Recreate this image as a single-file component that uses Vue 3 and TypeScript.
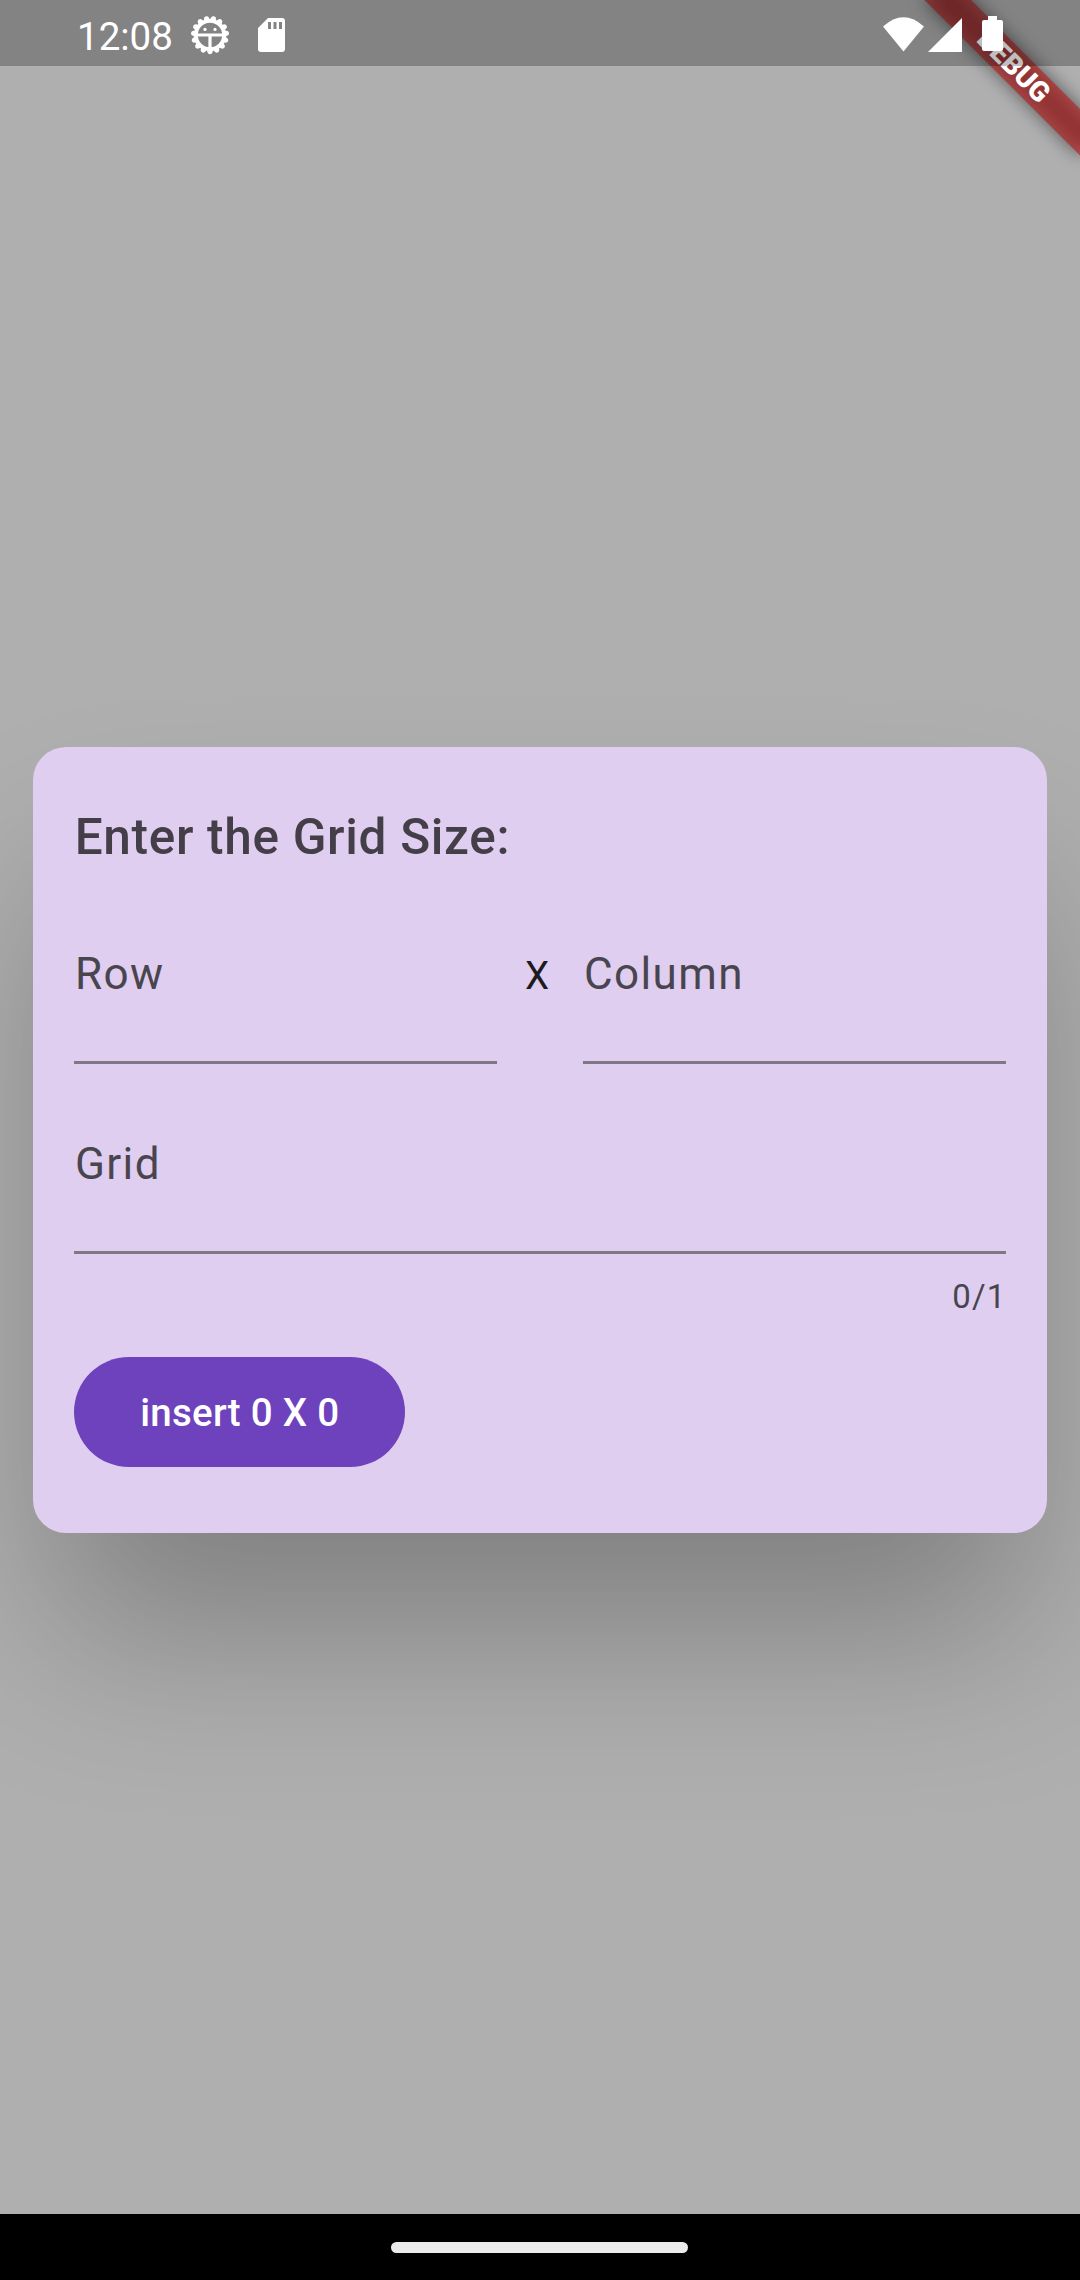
<script setup lang="ts">
import { ref } from 'vue'

const rows = ref(0)
const columns = ref(0)
const time = '12:08'
const teeth: number[] = Array.from({ length: 15 }, (_, i) => i * 24)
</script>

<template>
  <div class="screen">
    <div class="ribbon"><span class="ribbon-label">DEBUG</span></div>
    <header class="status">
      <span class="time">{{ time }}</span>
      <svg class="gear" width="40" height="40" viewBox="-20 -20 40 40">
        <path v-for="a in teeth" :key="a" :transform="`rotate(${a})`" d="M-3.600 14.500L-1.900 18.400Q0 20 1.900 18.400L3.600 14.500Z" fill="#fff" />
        <circle r="14" fill="none" stroke="#fff" stroke-width="3.6" />
        <path d="M-13 0H13M0 0V14" stroke="#fff" stroke-width="3.2" />
        <circle cx="-5" cy="-5.6" r="1.6" fill="#fff" />
        <circle cx="5" cy="-5.6" r="1.6" fill="#fff" />
      </svg>
      <svg class="card-icon" width="27" height="34" viewBox="0 0 27 34">
        <path fill="#fff" fill-rule="evenodd" d="M10 0H24Q27 0 27 3V31Q27 34 24 34H3Q0 34 0 31V10ZM10 4V11H13V4ZM15.5 4V11H18.500V4ZM21 4V11H24V4Z" />
      </svg>
      <span class="spacer"></span>
      <svg width="122" height="38" viewBox="0 0 122 38">
        <path fill="#fff" d="M0 10.500Q20.500-8 41 10.500L20.500 35.500Z" />
        <path fill="#fff" d="M45 36H79V2Z" />
        <path fill="#fff" d="M105 0H114V4H118Q120 4 120 6V33Q120 35 118 35H101Q99 35 99 33V6Q99 4 101 4H105Z" />
      </svg>
    </header>

    <main class="stage">
      <section class="dialog">
        <h1 class="title">Enter the Grid Size:</h1>
        <div class="fields">
          <label class="field">Row</label>
          <span class="times">X</span>
          <label class="field column">Column</label>
        </div>
        <label class="field grid">Grid</label>
        <div class="counter">0/1</div>
        <button class="insert">insert {{ rows }} X {{ columns }}</button>
      </section>
    </main>

    <footer class="nav"><span class="handle"></span></footer>
  </div>
</template>

<style>
body {
  margin: 0;
}
</style>

<style scoped>
.screen {
  position: relative;
  display: flex;
  flex-direction: column;
  width: 1080px;
  height: 2280px;
  overflow: hidden;
  background: #afafaf;
  font-family: Roboto, sans-serif;
}

.ribbon {
  position: absolute;
  top: 77px;
  left: 970px;
  width: 220px;
  height: 33px;
  transform: rotate(45deg);
  transform-origin: 110px -77px;
}

.ribbon::before {
  content: '';
  position: absolute;
  inset: 0;
  background: rgba(0, 0, 0, 0.5);
  filter: blur(9px);
}

.ribbon-label {
  position: relative;
  display: block;
  background: rgba(183, 28, 28, 0.627);
  color: #fff;
  font-size: 28.05px;
  font-weight: 900;
  line-height: 33px;
  text-align: center;
}

.status {
  position: relative;
  display: flex;
  align-items: flex-start;
  box-sizing: border-box;
  height: 66px;
  padding: 16px 75px 0 77px;
  background: rgba(0, 0, 0, 0.25);
  color: #fff;
}

.time {
  width: 113px;
  font-size: 38.5px;
  line-height: 42px;
}

.gear {
  margin-top: -1px;
}

.card-icon {
  margin: 2px 0 0 28px;
}

.spacer {
  flex: 1;
}

.stage {
  display: flex;
  flex: 1;
  justify-content: center;
  align-items: flex-start;
  padding-top: 681px;
}

.dialog {
  box-sizing: border-box;
  width: 1014px;
  height: 786px;
  padding: 57px 41.25px 0;
  border-radius: 33px;
  background: #dfceef;
  box-shadow: 0 117px 180px -20px rgba(0, 0, 0, 0.27);
}

.title {
  margin: 0;
  color: #443e49;
  font-size: 49.5px;
  font-weight: 500;
  line-height: 66px;
  letter-spacing: 0.69px;
  text-indent: 0.4px;
}

.fields {
  display: flex;
  justify-content: space-between;
  margin-top: 71px;
}

.field {
  display: block;
  box-sizing: border-box;
  width: 422.9px;
  height: 123px;
  border-bottom: 3px solid #7e7884;
  color: #49454f;
  font-size: 44px;
  line-height: 66px;
  letter-spacing: 1.375px;
  text-indent: 0.7px;
}

.field.column {
  text-indent: 1.2px;
}

.times {
  width: 85px;
  padding-left: 27.5px;
  box-sizing: border-box;
  color: #1d1b20;
  font-size: 38.5px;
  line-height: 70px;
  letter-spacing: 0.69px;
}

.field.grid {
  width: auto;
  margin-top: 67px;
}

.counter {
  margin-top: 20.5px;
  margin-right: -0.6px;
  color: #49454f;
  font-size: 33px;
  line-height: 44px;
  letter-spacing: 1.1px;
  text-align: right;
}

.insert {
  display: block;
  width: 331px;
  height: 110px;
  margin-top: 38.5px;
  padding: 0;
  border: 0;
  border-radius: 55px;
  background: #6e42bd;
  color: #fff;
  font: 500 38.5px/111px Roboto, sans-serif;
  letter-spacing: 0.275px;
}

.nav {
  display: flex;
  justify-content: center;
  align-items: center;
  height: 66px;
  background: #000;
}

.handle {
  width: 297px;
  height: 11px;
  margin-right: 1px;
  border-radius: 6px;
  background: #ececec;
}
</style>
